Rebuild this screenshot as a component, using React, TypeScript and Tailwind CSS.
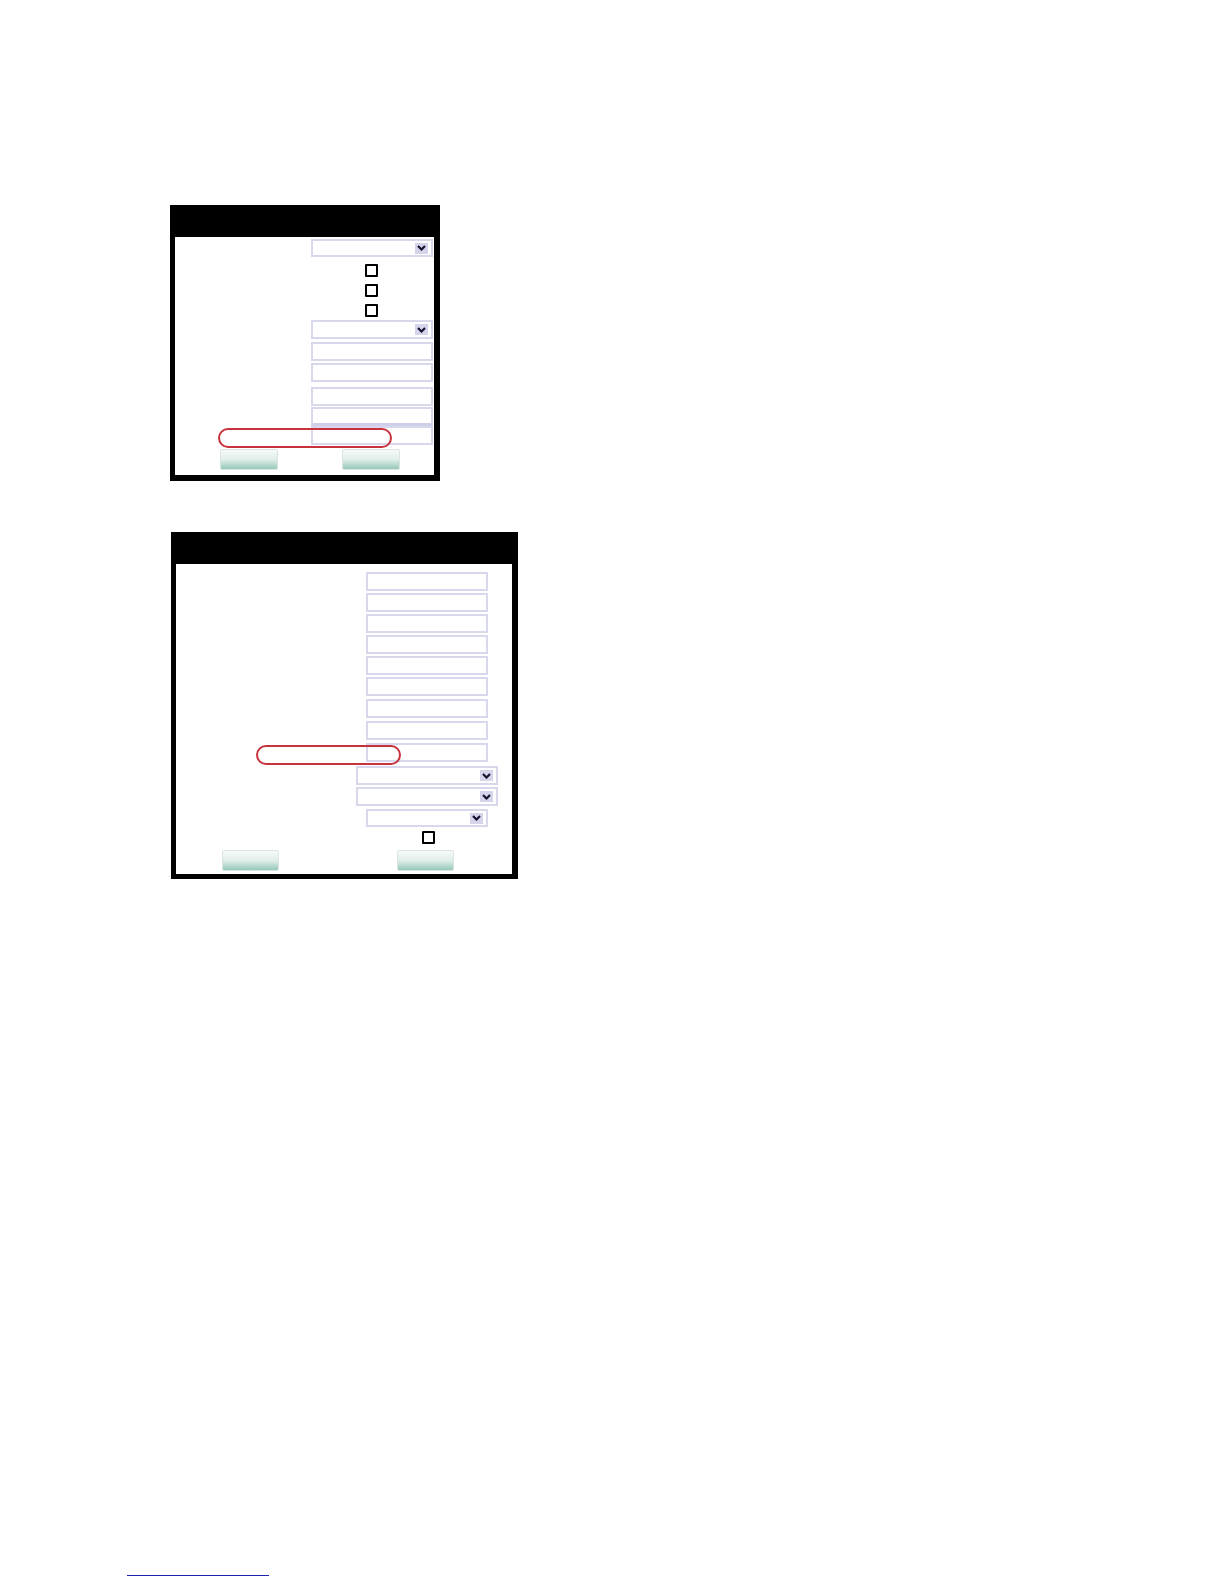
import React from "react";

function Field({ w = 122, h = 19, ml = 0, mt = 0, thickBottom = false }: { w?: number; h?: number; ml?: number; mt?: number; thickBottom?: boolean }) {
    return (
        <div
            className={`bg-white border-2 border-[#d8d8ec] ${thickBottom ? "border-b-[#cfcfea] border-b-[3px]" : ""}`}
            style={{ width: w, height: h, marginLeft: ml, marginTop: mt }}
        />
    );
}

function Select({ w = 122, h = 19, ml = 0, mt = 0 }: { w?: number; h?: number; ml?: number; mt?: number }) {
    return (
        <div
            className="bg-white border-2 border-[#d8d8ec] flex items-center justify-end pr-[3px]"
            style={{ width: w, height: h, marginLeft: ml, marginTop: mt }}
        >
            <div className="w-[13px] h-[11px] bg-[#d4d4ea] flex items-center justify-center">
                <svg width="9" height="6" viewBox="0 0 9 6">
                    <path d="M1 1 L4.5 4.5 L8 1" fill="none" stroke="#141432" strokeWidth="2.2" />
                </svg>
            </div>
        </div>
    );
}

function Check({ ml = 0, mt = 0 }: { ml?: number; mt?: number }) {
    return (
        <div
            className="w-[13px] h-[13px] border-2 border-black bg-white rounded-[1px]"
            style={{ marginLeft: ml, marginTop: mt }}
        />
    );
}

function Button({ w = 58 }: { w?: number }) {
    return (
        <div
            className="h-[21px] rounded-[2px] border border-[#dbe4e0] bg-gradient-to-b from-[#f6faf8] via-[#e0eee9] to-[#94c9bb]"
            style={{ width: w }}
        />
    );
}

function Oval({ left, top, width }: { left: number; top: number; width: number }) {
    return (
        <div
            className="absolute h-[20px] rounded-full border-2 border-[#c8323c]"
            style={{ left, top, width }}
        />
    );
}

export default function App() {
    return (
        <div className="w-[1224px] h-[1584px] bg-white pl-[127px] pt-[205px] font-['Liberation_Sans',sans-serif]">
            {/* Panel 1 */}
            <div className="ml-[43px] w-[270px] h-[276px] bg-black pt-[32px] pl-[5px] pr-[6px] pb-[6px]">
                <div className="relative w-full h-full bg-white flex flex-col">
                    <Select w={122} h={18} ml={136} mt={2} />
                    <Check ml={190} mt={7} />
                    <Check ml={190} mt={7} />
                    <Check ml={190} mt={7} />
                    <Select w={122} h={19} ml={136} mt={3} />
                    <Field ml={136} mt={3} />
                    <Field ml={136} mt={2} />
                    <Field ml={136} mt={5} />
                    <Field ml={136} mt={1} thickBottom />
                    <Field ml={136} mt={0} />
                    <div className="flex mt-[4px]">
                        <div className="ml-[45px]"><Button /></div>
                        <div className="ml-[64px]"><Button /></div>
                    </div>
                    <Oval left={43} top={191} width={174} />
                </div>
            </div>

            {/* Panel 2 */}
            <div className="ml-[44px] mt-[51px] w-[347px] h-[347px] bg-black pt-[32px] pl-[5px] pr-[6px] pb-[5px]">
                <div className="relative w-full h-full bg-white flex flex-col">
                    <Field ml={190} mt={8} />
                    <Field ml={190} mt={2} />
                    <Field ml={190} mt={2} />
                    <Field ml={190} mt={2} />
                    <Field ml={190} mt={2} />
                    <Field ml={190} mt={2} />
                    <Field ml={190} mt={3} />
                    <Field ml={190} mt={3} />
                    <Field ml={190} mt={3} />
                    <Select w={142} ml={180} mt={4} />
                    <Select w={142} ml={180} mt={2} />
                    <Select w={122} h={18} ml={190} mt={3} />
                    <Check ml={246} mt={4} />
                    <div className="flex mt-[6px]">
                        <div className="ml-[46px]"><Button w={57} /></div>
                        <div className="ml-[118px]"><Button w={57} /></div>
                    </div>
                    <Oval left={80} top={181} width={145} />
                </div>
            </div>

            {/* footnote rule */}
            <div className="mt-[696px] w-[142px] h-[1px] bg-[#1e22a8]" />
        </div>
    );
}
